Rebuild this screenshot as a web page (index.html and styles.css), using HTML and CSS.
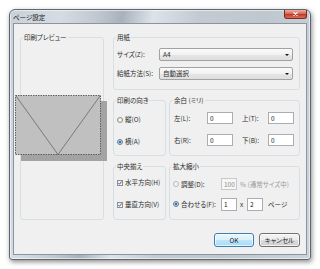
FILE: index.html
```html
<!DOCTYPE html>
<html lang="ja">
<head>
<meta charset="utf-8">
<title>ページ設定</title>
<link rel="stylesheet" href="styles.css">
</head>
<body>
<div class="window">
  <div class="titlebar">
    <span class="title">ページ設定</span>
    <span class="close"><svg width="5" height="4" viewBox="0 0 5 4"><path d="M0.5 0.3 L4.5 3.7 M4.5 0.3 L0.5 3.7" stroke="#fff" stroke-width="1.1"/></svg></span>
  </div>
  <div class="client">
    <div class="main">
      <fieldset class="group preview">
        <legend>印刷プレビュー</legend>
        <svg class="paper" width="92" height="66" viewBox="0 0 92 66">
          <rect x="6" y="6" width="86" height="60" fill="#a3a3a3"/>
          <rect x="0.5" y="0.5" width="85" height="59" fill="#c0c0c0" stroke="#5e5e5e" stroke-width="1" stroke-dasharray="1.5 1"/>
          <polyline points="1,1 43,59.5 85,1" fill="none" stroke="#707070" stroke-width="0.9"/>
        </svg>
      </fieldset>
      <div class="right">
        <fieldset class="group paper-group">
          <legend>用紙</legend>
          <div class="form-grid">
            <span class="lbl">サイズ(Z):</span>
            <div class="combo"><span>A4</span><i class="arrow"></i></div>
            <span class="lbl">給紙方法(S):</span>
            <div class="combo"><span>自動選択</span><i class="arrow"></i></div>
          </div>
        </fieldset>
        <div class="row row-mid">
          <fieldset class="group orient">
            <legend>印刷の向き</legend>
            <div class="opts">
              <div class="opt"><span class="radio"></span>縦(O)</div>
              <div class="opt"><span class="radio on"></span>横(A)</div>
            </div>
          </fieldset>
          <fieldset class="group margins">
            <legend>余白 (ミリ)</legend>
            <div class="margin-grid">
              <span class="lbl">左(L):</span><span class="input">0</span>
              <span class="lbl lbl2">上(T):</span><span class="input">0</span>
              <span class="lbl">右(R):</span><span class="input">0</span>
              <span class="lbl lbl2">下(B):</span><span class="input">0</span>
            </div>
          </fieldset>
        </div>
        <div class="row row-bot">
          <fieldset class="group center">
            <legend>中央揃え</legend>
            <div class="opts opts-center">
              <div class="opt"><span class="check"><svg width="4" height="4" viewBox="0 0 4 4"><path d="M0.4 2 L1.5 3.3 L3.7 0.5" fill="none" stroke="#2a4d8f" stroke-width="0.9"/></svg></span>水平方向(H)</div>
              <div class="opt"><span class="check"><svg width="4" height="4" viewBox="0 0 4 4"><path d="M0.4 2 L1.5 3.3 L3.7 0.5" fill="none" stroke="#2a4d8f" stroke-width="0.9"/></svg></span>垂直方向(V)</div>
            </div>
          </fieldset>
          <fieldset class="group scale">
            <legend>拡大縮小</legend>
            <div class="scale-rows">
              <div class="srow">
                <span class="scale-lbl"><span class="radio off"></span>調整(D):</span>
                <span class="input small disabled">100</span>
                <span class="hint">% (通常サイズ中)</span>
              </div>
              <div class="srow">
                <span class="scale-lbl"><span class="radio on"></span>合わせる(F):</span>
                <span class="input small tall">1</span>
                <span class="times">x</span>
                <span class="input small tall">2</span>
                <span class="pages">ページ</span>
              </div>
            </div>
          </fieldset>
        </div>
      </div>
    </div>
    <div class="buttons">
      <button class="btn default">OK</button>
      <button class="btn cancel">キャンセル</button>
    </div>
  </div>
</div>
</body>
</html>
```

FILE: styles.css
```css
html, body {
  margin: 0;
  padding: 0;
}

body {
  width: 320px;
  height: 269px;
  overflow: hidden;
  background: #ffffff;
  font-family: "Noto Sans CJK JP", "Noto Sans", sans-serif;
  font-size: 6.5px;
  font-feature-settings: "palt";
  color: #2b2b2b;
}

.window {
  margin: 9px 0 0 9px;
  width: 302px;
  height: 251px;
  box-sizing: border-box;
  border: 1px solid #5d6772;
  border-radius: 6px 6px 3px 3px;
  padding: 0 3px 4px 3px;
  background: linear-gradient(100deg, #c9d0d8 0%, #d6dce3 15%, #c2c9d1 25%, #a9b2bc 33%, #dde3e9 42%, #c3cad2 55%, #bfc7cf 75%, #cdd3da 100%);
  box-shadow: 1px 2px 5px rgba(0, 0, 0, 0.45), inset 0 0 0 1px rgba(255, 255, 255, 0.55);
  display: flex;
  flex-direction: column;
}

.titlebar {
  flex: none;
  height: 13px;
  display: flex;
  justify-content: space-between;
  align-items: flex-start;
}

.title {
  line-height: 12px;
  padding-top: 1px;
  font-size: 6.5px;
  color: #1a1a1a;
}

.close {
  width: 23px;
  height: 9px;
  box-sizing: border-box;
  border: 1px solid #7a2b22;
  border-top: none;
  border-radius: 0 0 3px 3px;
  background: linear-gradient(#eab0a2 0%, #d86a58 45%, #c23a28 55%, #d8705c 100%);
  display: flex;
  align-items: center;
  justify-content: center;
}

.close svg {
  display: block;
}

.client {
  flex: 1;
  box-sizing: border-box;
  background: #f0f0f0;
  border: 1px solid #8a95a1;
  padding: 9px 6px 7px 6px;
  display: flex;
  flex-direction: column;
}

.main {
  display: flex;
  gap: 9px;
  height: 187px;
}

fieldset.group {
  margin: 0;
  min-width: 0;
  box-sizing: border-box;
  border: 1px solid #d5dfe5;
  border-radius: 3px;
}

legend {
  padding: 0 1px;
  margin-left: -1px;
  line-height: 9px;
  font-size: 6.5px;
  color: #2b2b2b;
}

.preview {
  width: 84px;
  height: 187px;
  padding: 0 3px;
}

.paper {
  display: block;
  margin: 53px 0 0 -9px;
}

.right {
  width: 187px;
  display: flex;
  flex-direction: column;
  gap: 6px;
}

.paper-group {
  height: 57px;
  padding: 6px 6px 0 3px;
}

.form-grid {
  display: grid;
  grid-template-columns: 42px 134px;
  grid-template-rows: 13px 13px;
  row-gap: 6px;
  align-items: center;
}

.lbl {
  line-height: 9px;
  white-space: nowrap;
}

.combo {
  height: 13px;
  box-sizing: border-box;
  border: 1px solid #a2a2a2;
  border-radius: 2px;
  background: linear-gradient(#fbfbfb 0%, #f1f1f1 50%, #e6e6e6 51%, #dedede 100%);
  display: flex;
  align-items: center;
  justify-content: space-between;
  padding: 0 3px 0 3px;
  line-height: 9px;
}

.arrow {
  width: 0;
  height: 0;
  border-left: 2px solid transparent;
  border-right: 2px solid transparent;
  border-top: 2px solid #111;
}

.row {
  display: flex;
  gap: 3px;
}

.row-mid {
  height: 60px;
}

.row-bot {
  height: 58px;
}

.orient,
.center {
  width: 53px;
  padding: 0 2px 0 3px;
}

.opts {
  display: flex;
  flex-direction: column;
  gap: 13px;
  padding-top: 10px;
}

.opts-center {
  padding-top: 7px;
}

.opt {
  display: flex;
  align-items: center;
  line-height: 9px;
  white-space: nowrap;
}

.radio {
  flex: none;
  width: 6px;
  height: 6px;
  box-sizing: border-box;
  border: 1px solid #8c8c8c;
  border-radius: 50%;
  background: radial-gradient(circle, #ffffff 0, #e2e2e2 100%);
  margin-right: 2px;
}

.radio.on {
  border-color: #6b7c90;
  background: radial-gradient(circle, #1c5ea8 0, #3f86cf 1.3px, #e9eef4 1.7px, #d0d4d9 100%);
}

.radio.off {
  border-color: #b9b9b9;
  background: #f3f3f3;
}

.check {
  flex: none;
  width: 6px;
  height: 6px;
  box-sizing: border-box;
  border: 1px solid #8e8f8f;
  background: linear-gradient(#e9e9e9, #ffffff);
  margin-right: 2px;
  display: flex;
  align-items: center;
  justify-content: center;
}

.check svg {
  display: block;
}

.margins,
.scale {
  width: 131px;
}

.margins {
  padding: 7px 5px 0 4px;
}

.margin-grid {
  display: grid;
  grid-template-columns: 33px 26px 35px 26px;
  grid-template-rows: 12px 12px;
  row-gap: 10px;
  align-items: center;
}

.lbl2 {
  padding-left: 9px;
}

.input {
  display: block;
  height: 12px;
  box-sizing: border-box;
  border: 1px solid #abadb3;
  background: #ffffff;
  padding-left: 2px;
  line-height: 10px;
  color: #1b1b1b;
}

.scale {
  padding: 7px 4px 0 3px;
}

.scale-rows {
  display: flex;
  flex-direction: column;
  gap: 8px;
}

.srow {
  display: flex;
  align-items: center;
  height: 12px;
  white-space: nowrap;
}

.scale-lbl {
  width: 48px;
  flex: none;
  display: flex;
  align-items: center;
  line-height: 9px;
}

.input.small {
  width: 16px;
  flex: none;
}

.input.tall {
  height: 13px;
  line-height: 11px;
}

.input.disabled {
  background: #f6f6f6;
  border-color: #c8c8c8;
  color: #8c8c8c;
}

.hint {
  margin-left: 3px;
  color: #9a9a9a;
  line-height: 9px;
}

.times {
  width: 7px;
  margin-left: 3px;
  line-height: 9px;
}

.pages {
  margin-left: 5px;
  line-height: 9px;
}

.buttons {
  margin-top: auto;
  display: flex;
  justify-content: flex-end;
  gap: 5px;
}

.btn {
  font: inherit;
  font-size: 6.5px;
  height: 14px;
  box-sizing: border-box;
  padding: 0;
  border: 1px solid #707070;
  border-radius: 3px;
  color: #1b1b1b;
  background: linear-gradient(#f3f3f3 0%, #ebebeb 50%, #dddddd 51%, #cfcfcf 100%);
  box-shadow: inset 0 0 0 1px rgba(255, 255, 255, 0.7);
  line-height: 12px;
}

.btn.default {
  width: 40px;
  border-color: #3c7fb1;
  background: linear-gradient(#eaf6fd 0%, #d9f0fc 50%, #bee6fd 51%, #a7d9f5 100%);
}

.btn.cancel {
  width: 41px;
}
```
